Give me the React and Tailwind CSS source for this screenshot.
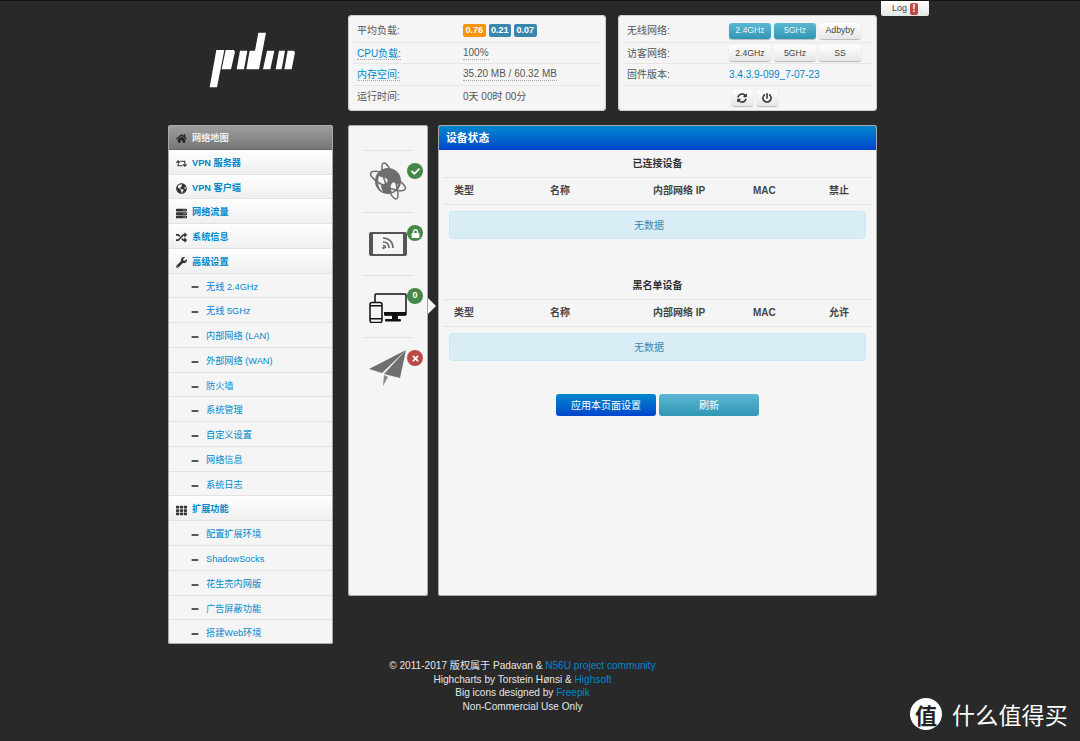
import {
  FaHome, FaRetweet, FaGlobeAmericas, FaServer, FaRandom, FaWrench, FaTh, FaMinus,
  FaSyncAlt, FaPowerOff, FaCheck, FaLock, FaTimes,
} from 'react-icons/fa';

const FONT = "font-['Liberation_Sans','Noto_Sans_CJK_SC',sans-serif]";

const sideItems = [
  { label: '网络地图', icon: FaHome, active: true },
  { label: 'VPN 服务器', icon: FaRetweet },
  { label: 'VPN 客户端', icon: FaGlobeAmericas },
  { label: '网络流量', icon: FaServer },
  { label: '系统信息', icon: FaRandom },
  { label: '高级设置', icon: FaWrench },
  { label: '无线 2.4GHz' },
  { label: '无线 5GHz' },
  { label: '内部网络 (LAN)' },
  { label: '外部网络 (WAN)' },
  { label: '防火墙' },
  { label: '系统管理' },
  { label: '自定义设置' },
  { label: '网络信息' },
  { label: '系统日志' },
  { label: '扩展功能', icon: FaTh },
  { label: '配置扩展环境' },
  { label: 'ShadowSocks' },
  { label: '花生壳内网版' },
  { label: '广告屏蔽功能' },
  { label: '搭建Web环境' },
];

// logo bars, traced on a 3x grid
const Logo = () => (
  <svg width="95" height="60" viewBox="0 0 285 180" className="block">
    <g fill="#fff">
      <polygon points="34,60 58,60 36,172 14,172" />
      <polygon points="62,60 86,60 90,65 78,118 50,118" />
      <polygon points="105,62 127,62 117,118 95,118" />
      <polygon points="160,8 183,8 162,118 124,118 134,62 150,62" />
      <polygon points="186,62 208,62 196,118 174,118" />
      <polygon points="222,62 240,62 230,118 212,118" />
      <polygon points="248,62 266,62 270,67 260,118 238,118" />
    </g>
  </svg>
);

const GlobeIcon = () => (
  <svg width="40" height="40" viewBox="0 0 40 40" className="block">
    <circle cx="20" cy="20" r="13" fill="#6e6e6e" />
    <path d="M11 15c3 2 6 1 8 3s-1 5-4 5-2 4 0 8c-3-2-7-8-4-16zM24 22c3-1 5 0 6 2-1 3-4 6-6 7-2-3-2-6 0-9z" fill="#f5f5f5" />
    <ellipse cx="20" cy="20" rx="19" ry="6" fill="none" stroke="#6e6e6e" strokeWidth="1.5" transform="rotate(25 20 20)" />
    <ellipse cx="22" cy="20" rx="5" ry="19" fill="none" stroke="#6e6e6e" strokeWidth="1.5" transform="rotate(-20 22 20)" />
  </svg>
);

const TabletIcon = () => (
  <svg width="38" height="24" viewBox="0 0 38 24" className="block">
    <rect x="0" y="0" width="38" height="24" rx="2" fill="#555" />
    <rect x="4" y="2" width="30" height="20" fill="#f5f5f5" />
    <g fill="none" stroke="#666" strokeWidth="1.6">
      <path d="M14 6c6 0 10 4 10 10" />
      <path d="M14 10c4 0 6 2 6 6" />
      <path d="M14 13.500c1.500 0 2.500 1 2.500 2.500" />
    </g>
    <circle cx="14.500" cy="16" r="1.200" fill="#666" />
  </svg>
);

const DevicesIcon = () => (
  <svg width="38" height="30" viewBox="0 0 38 30" className="block">
    <path d="M6 9V2a1 1 0 0 1 1-1h29a1 1 0 0 1 1 1v19a1 1 0 0 1-1 1H16" fill="none" stroke="#111" strokeWidth="1.5" />
    <rect x="15" y="19" width="22" height="3.500" fill="#111" />
    <rect x="23" y="22" width="6" height="4" fill="#111" />
    <rect x="16" y="26" width="16" height="2.500" rx="1" fill="#111" />
    <rect x="1" y="9.500" width="12" height="20" rx="2" fill="#f5f5f5" stroke="#111" strokeWidth="1.5" />
    <rect x="1" y="12" width="12" height="1.500" fill="#111" />
    <rect x="1" y="25" width="12" height="1.500" fill="#111" />
  </svg>
);

const PlaneIcon = () => (
  <svg width="38" height="36" viewBox="0 0 38 36" className="block">
    <path d="M37 0 0 19l13 4z" fill="#6f6f6f" />
    <path d="M37 0 15 24l16 4z" fill="#6f6f6f" />
    <path d="M15 25l-1 11 5-9z" fill="#8a8a8a" />
  </svg>
);

const Badge = ({ color, children }) => (
  <span className={`absolute left-[44px] top-[12px] flex h-[16px] w-[16px] items-center justify-center rounded-full text-[9px] font-bold text-white ${color}`}>
    {children}
  </span>
);

const StatusRow = ({ label, link, first, labelWidth, children }) => (
  <div className={`flex h-[21.7px] items-center pl-[4px] ${first ? '' : 'border-t border-[#e6e6e6]'}`}>
    <div className={labelWidth}>
      <span className={link ? 'border-b border-dotted border-[#9ab] leading-[12px] text-[#0088cc]' : 'leading-[12px] text-[#555]'}>{label}</span>
    </div>
    {children}
  </div>
);

const SmallBtn = ({ on, children }) => (
  <button className={`flex h-[16px] w-[42px] items-center justify-center rounded-[3px] text-[8.7px] shadow-[0_1px_1px_rgba(0,0,0,0.25)] ${on ? 'bg-gradient-to-b from-[#5bb8d4] to-[#2f96b4] text-[#e8f4f8]' : 'bg-gradient-to-b from-white to-[#e6e6e6] text-[#444]'}`}>
    {children}
  </button>
);

const NoData = () => (
  <div className="mx-[6px] mt-[6px] flex h-[28px] items-center justify-center rounded-[4px] border border-[#c9e8f1] bg-[#d9edf7] pr-[17px] text-[10px] text-[#3a87ad]">
    无数据
  </div>
);

const DeviceTable = ({ title, action }) => (
  <div>
    <div className="flex h-[27px] items-center justify-center text-[10px] font-bold text-[#333]">{title}</div>
    <div className="grid h-[28px] grid-cols-[96px_103px_100px_76px_1fr] items-center border-y border-[#e6e6e6] pb-[2px] pl-[11px] text-[10px] font-bold text-[#444]">
      <span>类型</span>
      <span>名称</span>
      <span>内部网络 IP</span>
      <span>MAC</span>
      <span>{action}</span>
    </div>
    <NoData />
  </div>
);

export default function App() {
  return (
    <div className={`relative h-[741px] overflow-hidden border-t border-[#151515] bg-[#292929] ${FONT}`}>
      {/* Log button */}
      <div className="absolute left-[881px] top-0 flex h-[15px] w-[48px] items-center justify-center gap-[3px] rounded-b-[2px] bg-gradient-to-b from-white to-[#e6e6e6] text-[9px] text-[#444]">
        Log
        <span className="flex h-[12px] w-[8px] items-center justify-center rounded-[2px] bg-[#b94a48] text-[10px] font-bold leading-none text-white">!</span>
      </div>

      <div className="ml-[168px] w-[709px] pt-[14px]">
        {/* Top row */}
        <div className="flex">
          <div className="w-[165px] pl-[37px] pt-[15px]">
            <Logo />
          </div>
          <div className="ml-[15px] h-[96px] w-[258px] rounded-[4px] bg-[#f5f5f5] px-[5px] pt-[5px] text-[10px] outline-1 -outline-offset-1 outline-[#ccc]">
            <StatusRow label="平均负载:" first labelWidth="w-[106px]">
              <span className="flex gap-[3px] text-[9px] font-bold text-white">
                <span className="rounded-[2px] bg-[#f89406] px-[2.5px] leading-[13px]">0.76</span>
                <span className="rounded-[2px] bg-[#3a87ad] px-[2.5px] leading-[13px]">0.21</span>
                <span className="rounded-[2px] bg-[#3a87ad] px-[2.5px] leading-[13px]">0.07</span>
              </span>
            </StatusRow>
            <StatusRow label="CPU负载:" link labelWidth="w-[106px]">
              <span className="border-b border-dotted border-[#9ab] leading-[12px] text-[#555]">100%</span>
            </StatusRow>
            <StatusRow label="内存空间:" link labelWidth="w-[106px]">
              <span className="border-b border-dotted border-[#9ab] leading-[12px] text-[#555]">35.20 MB / 60.32 MB</span>
            </StatusRow>
            <StatusRow label="运行时间:" labelWidth="w-[106px]">
              <span className="text-[#555]">0天 00时 00分</span>
            </StatusRow>
          </div>
          <div className="ml-[12px] h-[96px] w-[259px] rounded-[4px] bg-[#f5f5f5] px-[5px] pt-[5px] text-[10px] outline-1 -outline-offset-1 outline-[#ccc]">
            <StatusRow label="无线网络:" first labelWidth="w-[102px]">
              <span className="flex gap-[3px]">
                <SmallBtn on>2.4GHz</SmallBtn>
                <SmallBtn on>5GHz</SmallBtn>
                <SmallBtn>Adbyby</SmallBtn>
              </span>
            </StatusRow>
            <StatusRow label="访客网络:" labelWidth="w-[102px]">
              <span className="flex gap-[3px]">
                <SmallBtn>2.4GHz</SmallBtn>
                <SmallBtn>5GHz</SmallBtn>
                <SmallBtn>SS</SmallBtn>
              </span>
            </StatusRow>
            <StatusRow label="固件版本:" labelWidth="w-[102px]">
              <span className="text-[#0088cc]">3.4.3.9-099_7-07-23</span>
            </StatusRow>
            <div className="flex h-[25px] items-center justify-center gap-[4px] border-t border-[#e6e6e6] pb-[1px] pl-[14px]">
              <button className="flex h-[16px] w-[21px] items-center justify-center rounded-[3px] bg-gradient-to-b from-white to-[#e6e6e6] text-[10px] text-[#333] shadow-[0_1px_1px_rgba(0,0,0,0.25)]"><FaSyncAlt /></button>
              <button className="flex h-[16px] w-[21px] items-center justify-center rounded-[3px] bg-gradient-to-b from-white to-[#e6e6e6] text-[10px] text-[#333] shadow-[0_1px_1px_rgba(0,0,0,0.25)]"><FaPowerOff /></button>
            </div>
          </div>
        </div>

        {/* Main row */}
        <div className="mt-[14px] flex items-start">
          {/* Sidebar */}
          <div className="flex h-[519px] w-[165px] flex-col overflow-hidden rounded-[3px] bg-[#f5f5f5] outline-1 -outline-offset-1 outline-[#aaa]">
            {sideItems.map((item) => {
              const Icon = item.icon;
              if (item.active) {
                return (
                  <div key={item.label} className="flex flex-1 items-center border-b border-[#666] bg-gradient-to-b from-[#a0a0a0] to-[#777] pl-[8px] pt-[4px] text-[9.2px] font-bold text-[#eee]">
                    <Icon className="mr-[5px] w-[11px] text-[11px] text-[#222]" />
                    {item.label}
                  </div>
                );
              }
              if (Icon) {
                return (
                  <div key={item.label} className="flex flex-1 items-center border-b border-[#e2e2e2] bg-gradient-to-b from-white to-[#efefef] pl-[8px] pt-[4px] text-[9.2px] font-bold text-[#0088cc]">
                    <Icon className="mr-[5px] w-[11px] text-[11px] text-[#333]" />
                    {item.label}
                  </div>
                );
              }
              return (
                <div key={item.label} className="flex flex-1 items-center border-b border-[#e2e2e2] bg-[#f5f5f5] pl-[23px] pt-[4px] text-[9.2px] text-[#0088cc] last:border-b-0">
                  <FaMinus className="mr-[7px] w-[8px] text-[8px] text-[#222]" />
                  {item.label}
                </div>
              );
            })}
          </div>

          {/* Icon panel */}
          <div className="relative ml-[15px] h-[471px] w-[80px] rounded-[3px] bg-[#f5f5f5] pt-[25px] outline-1 -outline-offset-1 outline-[#aaa]">
            <div className="relative mx-[15px] h-[62px] border-t border-[#e3e3e3]">
              <div className="flex justify-center pt-[10px]"><GlobeIcon /></div>
              <Badge color="bg-[#468847]"><FaCheck /></Badge>
            </div>
            <div className="relative mx-[15px] h-[63px] border-t border-[#e3e3e3]">
              <div className="flex justify-center pt-[19px]"><TabletIcon /></div>
              <Badge color="bg-[#468847]"><FaLock /></Badge>
            </div>
            <div className="relative mx-[15px] h-[62px] border-t border-[#e3e3e3]">
              <div className="flex justify-center pt-[17px]"><DevicesIcon /></div>
              <Badge color="bg-[#468847]">0</Badge>
            </div>
            <div className="relative mx-[15px] h-[62px] border-t border-[#e3e3e3]">
              <div className="flex justify-center pt-[12px]"><PlaneIcon /></div>
              <Badge color="bg-[#b94a48]"><FaTimes /></Badge>
            </div>
            {/* pointer to the active pane */}
            <span className="absolute left-[80px] top-[173px] h-0 w-0 border-y-[8px] border-l-[8px] border-y-transparent border-l-[#f5f5f5]" />
          </div>

          {/* Main panel */}
          <div className="ml-[10px] h-[471px] w-[439px] overflow-hidden rounded-[3px] bg-[#f5f5f5] outline-1 -outline-offset-1 outline-[#aaa]">
            <div className="flex h-[25px] items-center bg-gradient-to-b from-[#0088cc] to-[#0044cc] pl-[8px] pt-[1px] text-[10.800px] font-bold text-white">设备状态</div>
            <div className="px-[5px]">
              <DeviceTable title="已连接设备" action="禁止" />
              <div className="h-[33px]" />
              <DeviceTable title="黑名单设备" action="允许" />
              <div className="mt-[33px] flex justify-center gap-[3px]">
                <button className="h-[22px] w-[100px] rounded-[3px] bg-gradient-to-b from-[#0088cc] to-[#0044cc] text-[10px] text-white">应用本页面设置</button>
                <button className="h-[22px] w-[100px] rounded-[3px] bg-gradient-to-b from-[#5bb8d4] to-[#2f96b4] text-[10px] text-white">刷新</button>
              </div>
            </div>
          </div>
        </div>

        {/* Footer */}
        <div className="mt-[15px] text-center text-[10.100px] leading-[13.700px] text-[#e6e6e6]">
          <div>© 2011-2017 版权属于 Padavan &amp; <span className="text-[#0088cc]">N56U project community</span></div>
          <div>Highcharts by Torstein Hønsi &amp; <span className="text-[#0088cc]">Highsoft</span></div>
          <div>Big icons designed by <span className="text-[#0088cc]">Freepik</span></div>
          <div>Non-Commercial Use Only</div>
        </div>
      </div>

      {/* Watermark */}
      <div className="absolute left-[910px] top-[697px] flex items-center gap-[10px] font-['Noto_Sans_CJK_SC',sans-serif] text-white">
        <span className="flex h-[32px] w-[32px] items-center justify-center rounded-full bg-white text-[22px] font-bold leading-none text-[#222]">值</span>
        <span className="text-[23px] leading-[32px] tracking-[0.200px]">什么值得买</span>
      </div>
    </div>
  );
}
